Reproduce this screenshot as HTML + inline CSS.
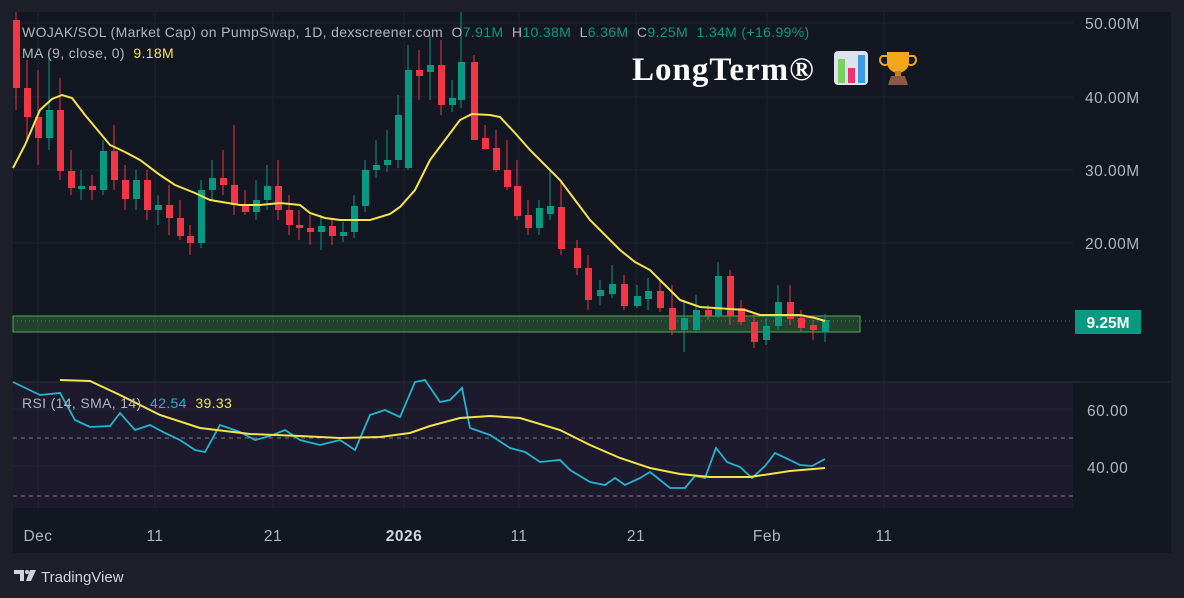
<!DOCTYPE html>
<html><head><meta charset="utf-8"><style>
html,body{margin:0;padding:0;background:#1d2029;width:1184px;height:598px;overflow:hidden;font-family:"Liberation Sans",sans-serif}
svg{display:block}
text{white-space:pre}
</style></head><body>
<svg width="1184" height="598" viewBox="0 0 1184 598" xmlns="http://www.w3.org/2000/svg" font-family="Liberation Sans, sans-serif">
<rect x="0" y="0" width="1184" height="598" fill="#1d2029"/>
<rect x="13" y="12" width="1158" height="541" fill="#131722"/>
<rect x="13" y="382" width="1060" height="126" fill="#1c1a2c"/>
<line x1="13" y1="382" x2="1171" y2="382" stroke="#2a2e39"/>
<g stroke="#222633" stroke-width="1">
<line x1="38" y1="12" x2="38" y2="508"/><line x1="155" y1="12" x2="155" y2="508"/><line x1="273" y1="12" x2="273" y2="508"/><line x1="404" y1="12" x2="404" y2="508"/><line x1="519" y1="12" x2="519" y2="508"/><line x1="636" y1="12" x2="636" y2="508"/><line x1="767" y1="12" x2="767" y2="508"/><line x1="884" y1="12" x2="884" y2="508"/>
<line x1="13" y1="23" x2="1073" y2="23"/><line x1="13" y1="97" x2="1073" y2="97"/><line x1="13" y1="170" x2="1073" y2="170"/><line x1="13" y1="243" x2="1073" y2="243"/>
<line x1="13" y1="409" x2="1073" y2="409"/><line x1="13" y1="466" x2="1073" y2="466"/>
</g>
<g stroke="#787b86" stroke-dasharray="4 4"><line x1="13" y1="438" x2="1073" y2="438"/><line x1="13" y1="496" x2="1073" y2="496"/></g>
<rect x="13" y="316" width="847" height="16" fill="rgba(76,175,80,0.28)" stroke="#4caf50" stroke-width="1"/>
<line x1="13" y1="321" x2="1073" y2="321" stroke="#089981" stroke-dasharray="1 3"/>
<g id="c">
<line x1="16" y1="12" x2="16" y2="110" stroke="#f23645"/><rect x="13" y="20" width="7" height="68" fill="#f23645"/>
<line x1="27" y1="60" x2="27" y2="140" stroke="#f23645"/><rect x="24" y="88" width="7" height="29" fill="#f23645"/>
<line x1="38" y1="70" x2="38" y2="165" stroke="#f23645"/><rect x="35" y="117" width="7" height="21" fill="#f23645"/>
<line x1="49" y1="50" x2="49" y2="150" stroke="#089981"/><rect x="46" y="110" width="7" height="28" fill="#089981"/>
<line x1="60" y1="78" x2="60" y2="180" stroke="#f23645"/><rect x="57" y="110" width="7" height="61" fill="#f23645"/>
<line x1="71" y1="150" x2="71" y2="195" stroke="#f23645"/><rect x="68" y="171" width="7" height="17" fill="#f23645"/>
<line x1="81" y1="170" x2="81" y2="200" stroke="#089981"/><rect x="78" y="186" width="7" height="3" fill="#089981"/>
<line x1="92" y1="175" x2="92" y2="200" stroke="#f23645"/><rect x="89" y="186" width="7" height="4" fill="#f23645"/>
<line x1="103" y1="140" x2="103" y2="195" stroke="#089981"/><rect x="100" y="151" width="7" height="39" fill="#089981"/>
<line x1="114" y1="125" x2="114" y2="190" stroke="#f23645"/><rect x="111" y="151" width="7" height="29" fill="#f23645"/>
<line x1="125" y1="165" x2="125" y2="210" stroke="#f23645"/><rect x="122" y="180" width="7" height="19" fill="#f23645"/>
<line x1="136" y1="170" x2="136" y2="210" stroke="#089981"/><rect x="133" y="180" width="7" height="19" fill="#089981"/>
<line x1="147" y1="170" x2="147" y2="220" stroke="#f23645"/><rect x="144" y="180" width="7" height="30" fill="#f23645"/>
<line x1="158" y1="195" x2="158" y2="225" stroke="#089981"/><rect x="155" y="205" width="7" height="5" fill="#089981"/>
<line x1="169" y1="185" x2="169" y2="235" stroke="#f23645"/><rect x="166" y="205" width="7" height="13" fill="#f23645"/>
<line x1="180" y1="200" x2="180" y2="240" stroke="#f23645"/><rect x="177" y="218" width="7" height="18" fill="#f23645"/>
<line x1="190" y1="225" x2="190" y2="255" stroke="#f23645"/><rect x="187" y="236" width="7" height="7" fill="#f23645"/>
<line x1="201" y1="180" x2="201" y2="248" stroke="#089981"/><rect x="198" y="190" width="7" height="53" fill="#089981"/>
<line x1="212" y1="160" x2="212" y2="200" stroke="#089981"/><rect x="209" y="178" width="7" height="12" fill="#089981"/>
<line x1="223" y1="150" x2="223" y2="195" stroke="#f23645"/><rect x="220" y="178" width="7" height="7" fill="#f23645"/>
<line x1="234" y1="125" x2="234" y2="215" stroke="#f23645"/><rect x="231" y="185" width="7" height="20" fill="#f23645"/>
<line x1="245" y1="190" x2="245" y2="215" stroke="#f23645"/><rect x="242" y="205" width="7" height="7" fill="#f23645"/>
<line x1="256" y1="180" x2="256" y2="220" stroke="#089981"/><rect x="253" y="200" width="7" height="12" fill="#089981"/>
<line x1="267" y1="165" x2="267" y2="210" stroke="#089981"/><rect x="264" y="186" width="7" height="14" fill="#089981"/>
<line x1="278" y1="160" x2="278" y2="220" stroke="#f23645"/><rect x="275" y="186" width="7" height="24" fill="#f23645"/>
<line x1="289" y1="195" x2="289" y2="235" stroke="#f23645"/><rect x="286" y="210" width="7" height="15" fill="#f23645"/>
<line x1="299" y1="210" x2="299" y2="240" stroke="#f23645"/><rect x="296" y="225" width="7" height="3" fill="#f23645"/>
<line x1="310" y1="215" x2="310" y2="245" stroke="#f23645"/><rect x="307" y="228" width="7" height="4" fill="#f23645"/>
<line x1="321" y1="215" x2="321" y2="250" stroke="#089981"/><rect x="318" y="226" width="7" height="6" fill="#089981"/>
<line x1="332" y1="218" x2="332" y2="245" stroke="#f23645"/><rect x="329" y="226" width="7" height="10" fill="#f23645"/>
<line x1="343" y1="222" x2="343" y2="242" stroke="#089981"/><rect x="340" y="232" width="7" height="4" fill="#089981"/>
<line x1="354" y1="195" x2="354" y2="238" stroke="#089981"/><rect x="351" y="206" width="7" height="26" fill="#089981"/>
<line x1="365" y1="160" x2="365" y2="212" stroke="#089981"/><rect x="362" y="170" width="7" height="36" fill="#089981"/>
<line x1="376" y1="140" x2="376" y2="178" stroke="#089981"/><rect x="373" y="165" width="7" height="5" fill="#089981"/>
<line x1="387" y1="130" x2="387" y2="172" stroke="#089981"/><rect x="384" y="160" width="7" height="5" fill="#089981"/>
<line x1="398" y1="95" x2="398" y2="168" stroke="#089981"/><rect x="395" y="115" width="7" height="45" fill="#089981"/>
<line x1="408" y1="45" x2="408" y2="170" stroke="#089981"/><rect x="405" y="70" width="7" height="98" fill="#089981"/>
<line x1="419" y1="50" x2="419" y2="100" stroke="#f23645"/><rect x="416" y="70" width="7" height="6" fill="#f23645"/>
<line x1="430" y1="35" x2="430" y2="100" stroke="#089981"/><rect x="427" y="65" width="7" height="7" fill="#089981"/>
<line x1="441" y1="40" x2="441" y2="115" stroke="#f23645"/><rect x="438" y="65" width="7" height="40" fill="#f23645"/>
<line x1="452" y1="80" x2="452" y2="112" stroke="#089981"/><rect x="449" y="98" width="7" height="7" fill="#089981"/>
<line x1="461" y1="12" x2="461" y2="108" stroke="#089981"/><rect x="458" y="62" width="7" height="38" fill="#089981"/>
<line x1="474" y1="55" x2="474" y2="140" stroke="#f23645"/><rect x="471" y="62" width="7" height="78" fill="#f23645"/>
<line x1="485" y1="125" x2="485" y2="150" stroke="#f23645"/><rect x="482" y="138" width="7" height="11" fill="#f23645"/>
<line x1="496" y1="130" x2="496" y2="172" stroke="#f23645"/><rect x="493" y="148" width="7" height="22" fill="#f23645"/>
<line x1="507" y1="140" x2="507" y2="190" stroke="#f23645"/><rect x="504" y="170" width="7" height="17" fill="#f23645"/>
<line x1="517" y1="160" x2="517" y2="220" stroke="#f23645"/><rect x="514" y="186" width="7" height="30" fill="#f23645"/>
<line x1="528" y1="200" x2="528" y2="235" stroke="#f23645"/><rect x="525" y="215" width="7" height="13" fill="#f23645"/>
<line x1="539" y1="200" x2="539" y2="235" stroke="#089981"/><rect x="536" y="208" width="7" height="20" fill="#089981"/>
<line x1="550" y1="170" x2="550" y2="220" stroke="#089981"/><rect x="547" y="206" width="7" height="8" fill="#089981"/>
<line x1="561" y1="180" x2="561" y2="255" stroke="#f23645"/><rect x="558" y="207" width="7" height="42" fill="#f23645"/>
<line x1="577" y1="240" x2="577" y2="275" stroke="#f23645"/><rect x="574" y="248" width="7" height="20" fill="#f23645"/>
<line x1="588" y1="255" x2="588" y2="310" stroke="#f23645"/><rect x="585" y="268" width="7" height="32" fill="#f23645"/>
<line x1="600" y1="280" x2="600" y2="305" stroke="#089981"/><rect x="597" y="290" width="7" height="6" fill="#089981"/>
<line x1="612" y1="265" x2="612" y2="298" stroke="#089981"/><rect x="609" y="284" width="7" height="10" fill="#089981"/>
<line x1="624" y1="275" x2="624" y2="310" stroke="#f23645"/><rect x="621" y="284" width="7" height="22" fill="#f23645"/>
<line x1="637" y1="285" x2="637" y2="308" stroke="#089981"/><rect x="634" y="296" width="7" height="10" fill="#089981"/>
<line x1="648" y1="278" x2="648" y2="310" stroke="#089981"/><rect x="645" y="291" width="7" height="8" fill="#089981"/>
<line x1="660" y1="280" x2="660" y2="312" stroke="#f23645"/><rect x="657" y="291" width="7" height="17" fill="#f23645"/>
<line x1="672" y1="285" x2="672" y2="335" stroke="#f23645"/><rect x="669" y="308" width="7" height="22" fill="#f23645"/>
<line x1="684" y1="300" x2="684" y2="352" stroke="#089981"/><rect x="681" y="318" width="7" height="12" fill="#089981"/>
<line x1="696" y1="295" x2="696" y2="333" stroke="#089981"/><rect x="693" y="310" width="7" height="20" fill="#089981"/>
<line x1="708" y1="305" x2="708" y2="320" stroke="#f23645"/><rect x="705" y="310" width="7" height="6" fill="#f23645"/>
<line x1="718" y1="262" x2="718" y2="318" stroke="#089981"/><rect x="715" y="276" width="7" height="40" fill="#089981"/>
<line x1="730" y1="270" x2="730" y2="325" stroke="#f23645"/><rect x="727" y="276" width="7" height="40" fill="#f23645"/>
<line x1="741" y1="300" x2="741" y2="325" stroke="#f23645"/><rect x="738" y="308" width="7" height="14" fill="#f23645"/>
<line x1="754" y1="312" x2="754" y2="348" stroke="#f23645"/><rect x="751" y="322" width="7" height="20" fill="#f23645"/>
<line x1="766" y1="318" x2="766" y2="345" stroke="#089981"/><rect x="763" y="326" width="7" height="14" fill="#089981"/>
<line x1="778" y1="285" x2="778" y2="330" stroke="#089981"/><rect x="775" y="302" width="7" height="24" fill="#089981"/>
<line x1="790" y1="285" x2="790" y2="325" stroke="#f23645"/><rect x="787" y="302" width="7" height="17" fill="#f23645"/>
<line x1="801" y1="310" x2="801" y2="332" stroke="#f23645"/><rect x="798" y="318" width="7" height="10" fill="#f23645"/>
<line x1="813" y1="320" x2="813" y2="340" stroke="#f23645"/><rect x="810" y="325" width="7" height="5" fill="#f23645"/>
<line x1="825" y1="314" x2="825" y2="342" stroke="#089981"/><rect x="822" y="320" width="7" height="12" fill="#089981"/>
</g>
<polyline fill="none" stroke="#f5e34a" stroke-width="2" points="13,168 25,145 40,110 52,99 62,95 72,98 85,115 110,145 125,152 140,160 160,175 175,185 195,193 210,200 240,205 260,205 280,203 300,205 310,213 325,218 340,220 370,220 390,214 400,207 415,190 430,160 445,140 460,120 472,114 490,115 500,117 515,133 530,150 545,165 560,180 575,200 590,220 605,235 620,250 635,262 650,270 665,285 680,300 700,307 730,309 745,310 760,315 780,315 800,315 815,318 825,321"/>
<polyline fill="none" stroke="#22b5cf" stroke-width="1.8" points="13,382 40,395 60,393 75,420 90,427 110,426 120,413 135,430 150,425 165,433 180,440 195,450 205,452 220,425 240,432 255,440 270,436 285,430 300,440 320,445 340,440 355,450 370,415 385,410 400,417 415,382 425,380 440,402 450,400 462,388 470,428 490,435 510,448 525,452 540,462 560,460 570,470 590,482 605,485 615,478 625,485 640,478 650,472 670,488 685,488 695,476 705,478 716,448 727,462 740,467 752,478 765,466 775,453 790,460 800,465 812,466 825,459"/>
<polyline fill="none" stroke="#f5e34a" stroke-width="2" points="60,380 90,381 120,395 160,415 200,428 250,434 300,436 340,438 380,437 410,433 430,426 460,418 490,416 520,418 560,430 590,445 620,458 650,468 680,474 710,477 750,477 790,471 825,468"/>
<g font-size="14" fill="#b2b5be" letter-spacing="0.35">
<text x="22" y="37">WOJAK/SOL (Market Cap) on PumpSwap, 1D, dexscreener.com  O<tspan fill="#089981">7.91M</tspan>  H<tspan fill="#089981">10.38M</tspan>  L<tspan fill="#089981">6.36M</tspan>  C<tspan fill="#089981">9.25M  1.34M (+16.99%)</tspan></text>
<text x="22" y="58">MA (9, close, 0)  <tspan fill="#f5e34a">9.18M</tspan></text>
<text x="22" y="408">RSI (14, SMA, 14)  <tspan fill="#22b5cf">42.54</tspan>  <tspan fill="#f5e34a">39.33</tspan></text>
</g>
<g font-size="15.5" fill="#b2b5be" letter-spacing="0.5">
<text x="1085" y="29">50.00M</text><text x="1085" y="103">40.00M</text><text x="1085" y="176">30.00M</text><text x="1085" y="249">20.00M</text>
<text x="1087" y="416">60.00</text><text x="1087" y="473">40.00</text>
<text x="38" y="541" text-anchor="middle">Dec</text><text x="155" y="541" text-anchor="middle">11</text><text x="273" y="541" text-anchor="middle">21</text><text x="404" y="541" text-anchor="middle" font-weight="bold" fill="#d1d4dc">2026</text><text x="519" y="541" text-anchor="middle">11</text><text x="636" y="541" text-anchor="middle">21</text><text x="767" y="541" text-anchor="middle">Feb</text><text x="884" y="541" text-anchor="middle">11</text>
</g>
<rect x="1075" y="310" width="66" height="24" fill="#089981"/>
<text x="1108" y="328" text-anchor="middle" font-size="15.5" font-weight="bold" fill="#fff">9.25M</text>
<text x="632" y="80" font-family="Liberation Serif, serif" font-weight="bold" font-size="33" letter-spacing="1" fill="#fff">LongTerm®</text>
<rect x="834" y="51" width="34" height="34" rx="4" fill="#dde3ec"/>
<rect x="838" y="59" width="7" height="24" fill="#7ad160"/><rect x="848" y="68" width="7" height="15" fill="#e6366c"/><rect x="858" y="55" width="7" height="28" fill="#3a9be8"/>
<path d="M887 52h22v10a11 11 0 0 1-22 0z" fill="#f2a71b"/><path d="M887 56h-5a5 5 0 0 0 6 8M909 56h5a5 5 0 0 1-6 8" fill="none" stroke="#f2a71b" stroke-width="2"/>
<rect x="895" y="71" width="6" height="5" fill="#c97f14"/><path d="M888 85l3-9h14l3 9z" fill="#8a5a45"/>
<g fill="#d1d4dc"><path d="M14 570h10v11h-4v-7h-6z"/><circle cx="27" cy="572" r="2"/><path d="M30 570h6l-5 11h-5z"/></g>
<text x="41" y="582" font-size="15" fill="#d1d4dc">TradingView</text>
</svg>
</body></html>
